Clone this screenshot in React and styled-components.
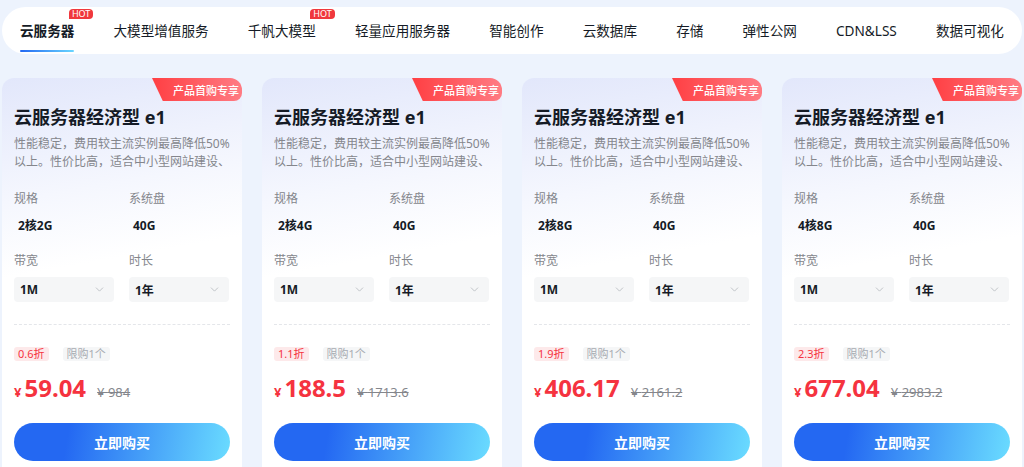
import React from "react";
import styled, { createGlobalStyle } from "styled-components";
import { ChevronDown } from "lucide-react";

const GlobalStyle = createGlobalStyle`
  html, body {
    margin: 0;
    padding: 0;
    background: #edf3fd;
    font-family: "Noto Sans", "Noto Sans CJK SC", sans-serif;
    overflow: hidden;
  }
`;

const tabs = [
  { name: "云服务器", hot: true, active: true },
  { name: "大模型增值服务" },
  { name: "千帆大模型", hot: true },
  { name: "轻量应用服务器" },
  { name: "智能创作" },
  { name: "云数据库" },
  { name: "存储" },
  { name: "弹性公网" },
  { name: "CDN&LSS" },
  { name: "数据可视化" },
];

const products = [
  { spec: "2核2G", off: "0.6折", price: "59.04", origin: "984" },
  { spec: "2核4G", off: "1.1折", price: "188.5", origin: "1713.6" },
  { spec: "2核8G", off: "1.9折", price: "406.17", origin: "2161.2" },
  { spec: "4核8G", off: "2.3折", price: "677.04", origin: "2983.2" },
];

export default function App() {
  return (
    <>
      <GlobalStyle />
      <Page>
        <TabBar>
          {tabs.map((t) => (
            <Tab key={t.name} $active={t.active}>
              {t.name}
              {t.hot && <Hot>HOT</Hot>}
            </Tab>
          ))}
        </TabBar>

        <Cards>
          {products.map((p) => (
            <Card key={p.spec}>
              <Ribbon>产品首购专享</Ribbon>
              <Title>云服务器经济型 e1</Title>
              <Desc>
                性能稳定，费用较主流实例最高降低50%以上。性价比高，适合中小型网站建设、
              </Desc>

              <Specs>
                <Field>
                  <Label>规格</Label>
                  <Value>{p.spec}</Value>
                </Field>
                <Field>
                  <Label>系统盘</Label>
                  <Value>40G</Value>
                </Field>
                <Field>
                  <Label>带宽</Label>
                  <Select>
                    1M <ChevronDown size={13} strokeWidth={1.5} color="#b4b7bc" />
                  </Select>
                </Field>
                <Field>
                  <Label>时长</Label>
                  <Select>
                    1年 <ChevronDown size={13} strokeWidth={1.5} color="#b4b7bc" />
                  </Select>
                </Field>
              </Specs>

              <Divider />

              <Tags>
                <Tag $red>{p.off}</Tag>
                <Tag>限购1个</Tag>
              </Tags>

              <PriceRow>
                <Yen>¥</Yen>
                <Price>{p.price}</Price>
                <Origin>¥ {p.origin}</Origin>
              </PriceRow>

              <BuyButton>立即购买</BuyButton>
            </Card>
          ))}
        </Cards>
      </Page>
    </>
  );
}

const Page = styled.div`
  padding: 7px 2px 0;
`;

const TabBar = styled.div`
  height: 47px;
  background: #fff;
  border-radius: 24px;
  display: flex;
  align-items: center;
  justify-content: space-between;
  padding: 0 18px 0 18px;
`;

const Tab = styled.div`
  position: relative;
  font-size: 13.6px;
  line-height: 47px;
  color: #151b26;
  font-weight: ${(p) => (p.$active ? 700 : 400)};
  white-space: nowrap;

  &::after {
    content: "";
    display: ${(p) => (p.$active ? "block" : "none")};
    position: absolute;
    left: 0;
    right: 0;
    bottom: 2px;
    height: 2px;
    border-radius: 1px;
    background: linear-gradient(90deg, #2468f2, #6ad6ff);
  }
`;

const Hot = styled.span`
  position: absolute;
  top: 2px;
  right: -19px;
  height: 10px;
  line-height: 10px;
  padding: 0 3px;
  font-size: 9px;
  font-weight: 400;
  color: #fff;
  background: #f0383d;
  border-radius: 4px 4px 4px 0;
`;

const Cards = styled.div`
  display: grid;
  grid-template-columns: repeat(4, 240px);
  gap: 20px;
  margin-top: 24px;
`;

const Card = styled.div`
  position: relative;
  overflow: hidden;
  border-radius: 12px;
  background: linear-gradient(170deg, #e2e7fb 0%, #f5f7fe 28%, #ffffff 45%);
  padding: 26px 12px 20px;
  box-sizing: border-box;
`;

const Ribbon = styled.div`
  position: absolute;
  top: 0;
  right: 0;
  width: 90px;
  height: 23px;
  box-sizing: border-box;
  padding-left: 18px;
  display: flex;
  align-items: center;
  justify-content: center;
  font-size: 11px;
  font-weight: 500;
  color: #fff;
  background: linear-gradient(90deg, #ff3f43, #ff7b83);
  clip-path: polygon(0 0, 100% 0, 100% 100%, 12% 100%);
  border-bottom-right-radius: 8px;
`;

const Title = styled.div`
  font-size: 18px;
  line-height: 26px;
  font-weight: 700;
  color: #151b26;
`;

const Desc = styled.div`
  margin-top: 5px;
  font-size: 12px;
  line-height: 18px;
  height: 36px;
  overflow: hidden;
  color: #84868c;
`;

const Specs = styled.div`
  display: grid;
  grid-template-columns: 100px 100px;
  column-gap: 15px;
  row-gap: 17px;
  margin-top: 19px;
`;

const Field = styled.div`
  display: flex;
  flex-direction: column;
`;

const Label = styled.div`
  font-size: 12px;
  line-height: 18px;
  color: #84868c;
`;

const Value = styled.div`
  margin-top: 9px;
  padding-left: 4px;
  font-size: 12px;
  line-height: 18px;
  font-weight: 700;
  color: #151b26;
`;

const Select = styled.div`
  margin-top: 7px;
  height: 25px;
  border-radius: 4px;
  background: #f5f6f7;
  display: flex;
  align-items: center;
  justify-content: space-between;
  padding: 0 8px 0 6px;
  font-size: 12px;
  font-weight: 700;
  color: #151b26;
`;

const Divider = styled.div`
  margin-top: 22px;
  border-top: 1px dashed #e4e6ea;
`;

const Tags = styled.div`
  display: flex;
  gap: 14px;
  margin-top: 22px;
`;

const Tag = styled.span`
  height: 14px;
  line-height: 14px;
  padding: 0 4px;
  border-radius: 3px;
  font-size: 11px;
  color: ${(p) => (p.$red ? "#f5333f" : "#a9adb3")};
  background: ${(p) => (p.$red ? "#fde9ea" : "#f5f6f7")};
`;

const PriceRow = styled.div`
  display: flex;
  align-items: baseline;
  margin-top: 10px;
  height: 28px;
`;

const Yen = styled.span`
  font-size: 13px;
  font-weight: 700;
  color: #f5333f;
  margin-right: 3px;
`;

const Price = styled.span`
  font-family: "Noto Sans", sans-serif;
  font-size: 24px;
  font-weight: 700;
  color: #f5333f;
`;

const Origin = styled.span`
  margin-left: 11px;
  font-size: 13px;
  color: #84868c;
  text-decoration: line-through;
`;

const BuyButton = styled.button`
  display: block;
  width: 100%;
  height: 38px;
  margin-top: 24px;
  border: none;
  border-radius: 19px;
  background: linear-gradient(100deg, #2468f2 25%, #6adcff 100%);
  color: #fff;
  font-family: "Noto Sans CJK SC", sans-serif;
  font-size: 14px;
  font-weight: 700;
  cursor: pointer;
`;
